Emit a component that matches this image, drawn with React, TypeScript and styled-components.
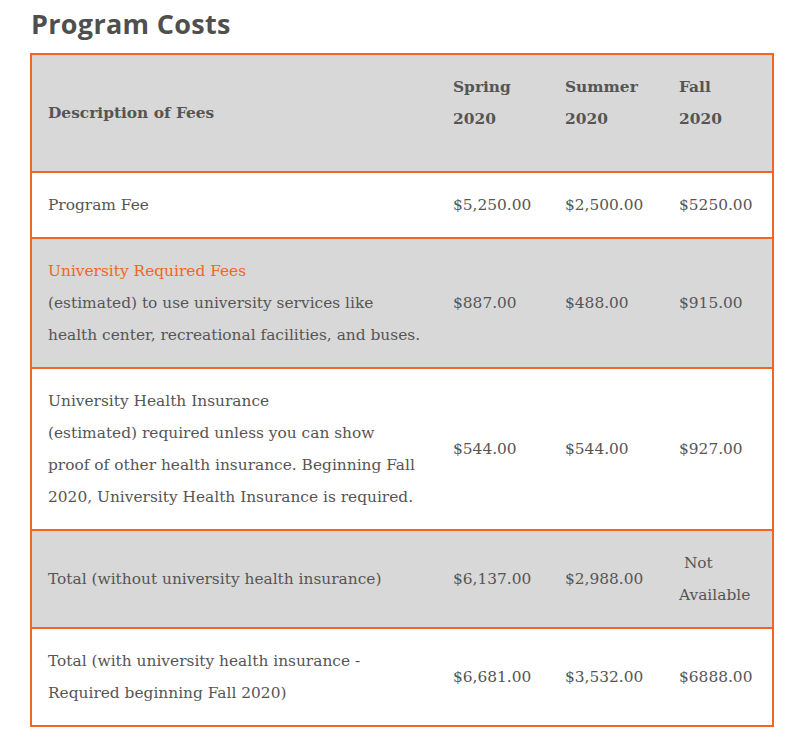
import React from "react";
import styled, { createGlobalStyle } from "styled-components";

const Global = createGlobalStyle`
  html, body { margin: 0; padding: 0; background: #fff; }
  body { font-family: "DejaVu Serif", "Liberation Serif", serif; color: #555; }
`;

const Page = styled.div`
  padding: 7px 11px 12px 30px;
`;

const Heading = styled.h2`
  margin: 0 0 12px 1px;
  font-family: "Open Sans", "Liberation Sans", sans-serif;
  font-weight: 700;
  font-size: 27px;
  line-height: 34px;
  letter-spacing: 0.3px;
  color: #4f4f4f;
`;

const Table = styled.table`
  width: 744px;
  border-collapse: collapse;
  table-layout: fixed;
  border: 2px solid #f26522;
  font-size: 15.4px;
  line-height: 32px;
  color: #555;
`;

const Row = styled.tr<{ $shade?: boolean }>`
  background: ${(p) => (p.$shade ? "#d8d8d8" : "#fff")};
  border-bottom: 2px solid #f26522;
`;

const HeadCell = styled.th<{ $year?: boolean }>`
  text-align: left;
  vertical-align: middle;
  font-weight: 700;
  padding: ${(p) => (p.$year ? "16px 16px 36px" : "16px")};
`;

const Cell = styled.td<{ $desc?: boolean }>`
  vertical-align: middle;
  padding: ${(p) => (p.$desc ? "16px 16.5px 16px 16px" : "16px")};
`;

const Accent = styled.span`
  color: #f26522;
`;

const rows: { desc: React.ReactNode; vals: React.ReactNode[]; shade: boolean }[] = [
  { desc: "Program Fee", vals: ["$5,250.00", "$2,500.00", "$5250.00"], shade: false },
  {
    desc: (
      <>
        <Accent>University Required Fees</Accent>
        <br />
        (estimated) to use university services like health center, recreational facilities, and buses.
      </>
    ),
    vals: ["$887.00", "$488.00", "$915.00"],
    shade: true,
  },
  {
    desc: (
      <>
        University Health Insurance
        <br />
        (estimated) required unless you can show proof of other health insurance. Beginning Fall 2020, University
        Health Insurance is required.
      </>
    ),
    vals: ["$544.00", "$544.00", "$927.00"],
    shade: false,
  },
  {
    desc: "Total (without university health insurance)",
    vals: ["$6,137.00", "$2,988.00", <>&nbsp;Not Available</>],
    shade: true,
  },
  {
    desc: "Total (with university health insurance - Required beginning Fall 2020)",
    vals: ["$6,681.00", "$3,532.00", "$6888.00"],
    shade: false,
  },
];

export default function App() {
  return (
    <Page>
      <Global />
      <Heading>Program Costs</Heading>
      <Table>
        <colgroup>
          <col style={{ width: 406 }} />
          <col style={{ width: 112 }} />
          <col style={{ width: 114 }} />
          <col style={{ width: 110 }} />
        </colgroup>
        <thead>
          <Row $shade>
            <HeadCell>Description of Fees</HeadCell>
            <HeadCell $year>Spring 2020</HeadCell>
            <HeadCell $year>Summer 2020</HeadCell>
            <HeadCell $year>Fall 2020</HeadCell>
          </Row>
        </thead>
        <tbody>
          {rows.map((r, i) => (
            <Row key={i} $shade={r.shade}>
              <Cell $desc>{r.desc}</Cell>
              {r.vals.map((v, j) => (
                <Cell key={j}>{v}</Cell>
              ))}
            </Row>
          ))}
        </tbody>
      </Table>
    </Page>
  );
}
